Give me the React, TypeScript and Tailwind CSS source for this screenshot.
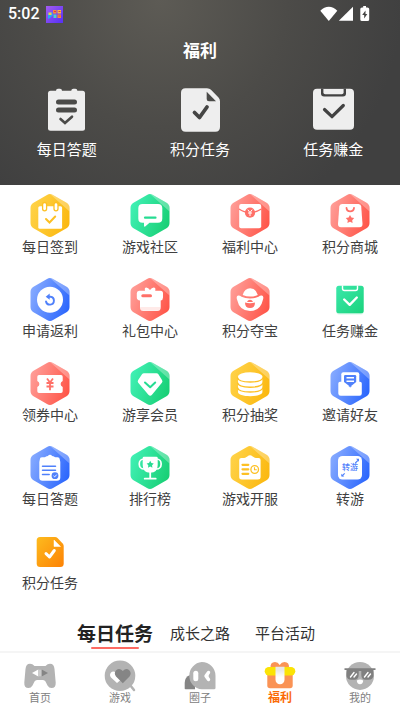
import { useState, ReactNode } from 'react'

type Tone = 'yellow' | 'green' | 'red' | 'blue'

const tones: Record<Tone, { from: string; to: string; solid: string }> = {
  yellow: { from: '#ffd247', to: '#fbb80f', solid: '#fdc023' },
  green: { from: '#40f0b4', to: '#18cf74', solid: '#26dc92' },
  red: { from: '#ff9d97', to: '#ff5548', solid: '#ff7068' },
  blue: { from: '#86aaff', to: '#2b66fd', solid: '#4f80fb' },
}

const STAR = 'M0 -4.2L1.4 -1.7L4.2 -1.2L2.2 .9L2.6 3.8L0 2.5L-2.6 3.8L-2.2 .9L-4.2 -1.2L-1.4 -1.7Z'

function Hexagon({ tone, children }: { tone: Tone; children: (solid: string) => ReactNode }) {
  const { from, to, solid } = tones[tone]
  return (
    <svg viewBox="0 0 40 44" className="h-11 w-10" aria-hidden="true">
      <defs>
        <linearGradient id={`hex-${tone}`} x1="0" y1="0.3" x2="1" y2="0.7">
          <stop offset="0" stopColor={from} />
          <stop offset="1" stopColor={to} />
        </linearGradient>
      </defs>
      <path
        d="M17 1Q20 -.8 23 1L36.5 8.8Q39.5 10.6 39.5 14V29Q39.5 32.4 36.5 34.2L23 42Q20 43.8 17 42L3.5 34.2Q.5 32.4 .5 29V14Q.5 10.6 3.5 8.8Z"
        fill={`url(#hex-${tone})`}
      />
      <path d="M20 .1Q21.5 .1 23 1L36.5 8.8Q39.5 10.6 39.5 14V17.5Z" fill="#fff" opacity=".3" />
      {children(solid)}
    </svg>
  )
}

function CheckinIcon() {
  return (
    <Hexagon tone="yellow">
      {(c) => (
        <>
          <rect x="8.3" y="12.2" width="23.8" height="22.6" rx="1.5" fill="#fff" />
          <rect x="12.6" y="8.5" width="4" height="8.3" rx="2" fill="#fff" stroke={c} strokeWidth="1.3" />
          <rect x="24" y="8.5" width="4" height="8.3" rx="2" fill="#fff" stroke={c} strokeWidth="1.3" />
          <path d="M16 25l3.5 3.5 5.7-6" fill="none" stroke={c} strokeWidth="2" strokeLinecap="round" />
        </>
      )}
    </Hexagon>
  )
}

function CommunityIcon() {
  return (
    <Hexagon tone="green">
      {(c) => (
        <>
          <path
            d="M12.5 10H28Q32.3 10 32.3 14.3V24.5Q32.3 28.8 28 28.8H19.5L15.2 32.6Q14 33 14 31.5V28.8H12.5Q8.3 28.8 8.3 24.5V14.3Q8.3 10 12.5 10Z"
            fill="#fff"
          />
          <path d="M15 23.7H25.5" stroke={c} strokeWidth="2.2" strokeLinecap="round" />
        </>
      )}
    </Hexagon>
  )
}

function EnvelopeIcon() {
  return (
    <Hexagon tone="red">
      {(c) => (
        <>
          <rect x="9.2" y="10" width="22" height="24.3" rx="2" fill="#fff" />
          <path d="M9 15Q14 18.5 20 18.5T31.4 15" fill="none" stroke={c} strokeWidth="1.3" />
          <circle cx="20" cy="18.7" r="5.1" fill={c} />
          <path d="M17.8 15.7L20 18.5L22.2 15.7M20 18.5V22M18 19H22" fill="none" stroke="#fff" strokeWidth="1" />
        </>
      )}
    </Hexagon>
  )
}

function MallIcon() {
  return (
    <Hexagon tone="red">
      {(c) => (
        <>
          <path
            d="M12 10H28.5Q31 10 31.2 12.5L32.5 30Q32.5 33.3 29.5 33.3H11Q8 33.3 8 30L9.3 12.5Q9.5 10 12 10Z"
            fill="#fff"
          />
          <path d="M16.5 13.8Q16.8 17.3 20.2 17.3T24 13.8" fill="none" stroke={c} strokeWidth="1.8" strokeLinecap="round" />
          <path d={STAR} transform="translate(20 25.3)" fill={c} />
        </>
      )}
    </Hexagon>
  )
}

function RefundIcon() {
  return (
    <Hexagon tone="blue">
      {(c) => (
        <>
          <circle cx="20" cy="21.7" r="13" fill="#fff" />
          <path d="M18 18.7H20.5A4 4 0 1 1 16 23.5" fill="none" stroke={c} strokeWidth="1.9" strokeLinecap="round" />
          <path d="M19.7 15.5V21.7L15.7 18.7Z" fill={c} />
        </>
      )}
    </Hexagon>
  )
}

function GiftIcon() {
  return (
    <Hexagon tone="red">
      {(c) => (
        <>
          <path
            d="M9.2 12.7H15Q14.2 9.5 16.3 9.5Q18.3 9.5 20 12Q21.7 9.5 23.7 9.5Q26 9.5 25.2 12.7H30.5Q33 12.7 33 15.2V19.5Q33 22 30.7 22.5V29.5Q30.7 33 27.2 33H13.5Q10 33 10 29.5V22.5Q6.8 22 6.8 19.5V15.2Q6.8 12.7 9.2 12.7Z"
            fill="#fff"
          />
          <path d="M12.8 17.7H20.5" stroke={c} strokeWidth="3" strokeLinecap="round" />
          <path d="M10.2 29H30.5V30Q30.5 32.8 27.2 32.8H13.5Q10.2 32.8 10.2 30Z" fill={c} opacity=".15" />
        </>
      )}
    </Hexagon>
  )
}

function IngotIcon() {
  return (
    <Hexagon tone="red">
      {(c) => (
        <>
          <path d="M12.7 17Q14.5 10.3 20.2 10.3T27.8 17Q24 18.5 20.2 18.5T12.7 17Z" fill="#fff" />
          <path
            d="M8 17.5Q10 17.3 11.5 18.8Q15 20.5 20 20.5T28.5 18.8Q30 17.3 32 17.5Q34 18 33 21.5Q30.5 33 20 33T7 21.5Q6 18 8 17.5Z"
            fill="#fff"
          />
          <path d="M17.3 23.3Q18 21.8 20 21.8T22.7 23.3V24H17.3Z" fill={c} />
          <path d="M15 24.5Q20 26 25 24.5Q25 30 20 30T15 24.5Z" fill={c} />
        </>
      )}
    </Hexagon>
  )
}

function EarnIcon() {
  return (
    <svg viewBox="0 0 40 44" className="h-11 w-10" aria-hidden="true">
      <defs>
        <linearGradient id="earn" x1="0" y1="0" x2="1" y2="1">
          <stop offset="0" stopColor="#3be8ab" />
          <stop offset="1" stopColor="#1bd37c" />
        </linearGradient>
      </defs>
      <rect x="6.5" y="8.5" width="27" height="28" rx="2.5" fill="#25d888" opacity=".2" />
      <rect x="6.3" y="7.8" width="27.4" height="27.4" rx="2.5" fill="url(#earn)" />
      <path d="M12.5 7.5V10.5Q12.5 12.5 14.5 12.5H25.5Q27.5 12.5 27.5 10.5V7.5" fill="none" stroke="#fff" strokeWidth="1.4" />
      <path d="M14.2 21.5L19.7 26.8L26.8 19.5" fill="none" stroke="#fff" strokeWidth="2.4" strokeLinecap="round" strokeLinejoin="round" />
    </svg>
  )
}

function CouponIcon() {
  return (
    <Hexagon tone="red">
      {(c) => (
        <>
          <path
            d="M9 13H31Q32.7 13 32.7 14.7V19A3.2 3.2 0 0 0 32.7 25V29.3Q32.7 31 31 31H9Q7.3 31 7.3 29.3V25A3.2 3.2 0 0 0 7.3 19V14.7Q7.3 13 9 13Z"
            fill="#fff"
          />
          <path d="M17 16.5L20 20.5L23 16.5M20 20.5V28.3M16.5 21H23.5M16.5 24.5H23.5" fill="none" stroke={c} strokeWidth="1.8" />
        </>
      )}
    </Hexagon>
  )
}

function MemberIcon() {
  return (
    <Hexagon tone="green">
      {(c) => (
        <>
          <path
            d="M14 11.3H26.5Q27.7 11.3 28.4 12.3L32 18Q33 19.5 31.9 20.8L22 32.8Q20.2 34.5 18.4 32.8L8.2 20.8Q7.2 19.5 8.2 18L12 12.3Q12.7 11.3 14 11.3Z"
            fill="#fff"
          />
          <path d="M15 20.5L20.2 25.3L25.2 20.5" fill="none" stroke={c} strokeWidth="2" strokeLinecap="round" strokeLinejoin="round" />
        </>
      )}
    </Hexagon>
  )
}

function CoinsIcon() {
  return (
    <Hexagon tone="yellow">
      {(c) => (
        <>
          <path d="M8 14.7V30C8 32.5 13.4 34.2 20.2 34.2S32.4 32.5 32.4 30V14.7Z" fill="#fff" />
          <ellipse cx="20.2" cy="14.7" rx="12.2" ry="4.4" fill="#fff" />
          <path
            d="M7.5 15.5C8 18.5 13.4 20 20.2 20S32.4 18.5 32.9 15.5M7.5 20.7C8 23.7 13.4 25.2 20.2 25.2S32.4 23.7 32.9 20.7M7.5 25.5C8 28.5 13.4 30 20.2 30S32.4 28.5 32.9 25.5"
            fill="none"
            stroke={c}
            strokeWidth="1.4"
          />
        </>
      )}
    </Hexagon>
  )
}

function InviteIcon() {
  return (
    <Hexagon tone="blue">
      {(c) => (
        <>
          <rect x="11.3" y="10.3" width="18" height="14" rx="2" fill="#fff" />
          <path
            d="M10 19.7H12.5Q13.5 19.7 14 20.5L20.2 25.5L26.5 20.5Q27 19.7 28 19.7H30Q31.8 19.7 31.8 21.5V31.5Q31.8 33.8 29.5 33.8H10.7Q8.3 33.8 8.3 31.5V21.5Q8.3 19.7 10 19.7Z"
            fill="#fff"
          />
          <path d="M14 14.2Q14 13 15.2 13H25Q26.2 13 26.2 14.2V20L20.2 24.8L14 20Z" fill={c} />
          <path d="M16.5 15.8H24M16.5 19.2H24" stroke="#fff" strokeWidth="1.5" />
        </>
      )}
    </Hexagon>
  )
}

function QuizIcon() {
  return (
    <Hexagon tone="blue">
      {(c) => (
        <>
          <path
            d="M12 11.3H14.5Q15.5 11.3 16 10.5Q16.5 10 18 10Q18.500 8.800 20 8.800T22 10Q23.5 10 24 10.5Q24.5 11.3 25.5 11.3H27.5Q29.8 11.3 29.8 13.500L30.3 16V31.5Q30.3 34.7 27 34.7H12.5Q9.3 34.7 9.3 31.5V16L9.800 13.5Q9.8 11.3 12 11.3Z"
            fill="#fff"
          />
          <path d="M12.5 20.2H25.5M12.5 24.3H25.5M12.5 28.4H19.2" stroke={c} strokeWidth="1.5" strokeLinecap="round" />
          <circle cx="25" cy="29.7" r="3.4" fill={c} />
          <path d="M23.5 29.8L24.7 30.9L26.7 28.6" fill="none" stroke="#fff" strokeWidth=".9" />
        </>
      )}
    </Hexagon>
  )
}

function TrophyIcon() {
  return (
    <Hexagon tone="green">
      {(c) => (
        <>
          <rect x="9.3" y="13" width="21.8" height="10" rx="4.5" fill="none" stroke="#fff" strokeWidth="1.7" />
          <path d="M14 10.7H26.4Q27.7 10.7 27.7 12V19Q27.7 26.7 20.2 26.7T12.7 19V12Q12.7 10.7 14 10.7Z" fill="#fff" />
          <path d="M20.2 26V32.5M14.7 32.7H25.7" stroke="#fff" strokeWidth="1.8" strokeLinecap="round" />
          <path d={STAR} transform="translate(20.2 18.4) scale(.85)" fill={c} />
        </>
      )}
    </Hexagon>
  )
}

function OpeningIcon() {
  return (
    <Hexagon tone="yellow">
      {(c) => (
        <>
          <path
            d="M11.5 12H14Q15.5 12 16 11.3Q17 11 17.7 10.3Q18.5 9.3 20 9.3T22.3 10.3Q23 11 24 11.3Q24.5 12 26 12H28.5Q30.6 12 30.6 14V31Q30.6 33.5 27.8 33.5H12Q9.2 33.5 9.2 31V14Q9.2 12 11.5 12Z"
            fill="#fff"
          />
          <path d="M12.5 18.8H18.3M12.5 23.3H18.3M12.5 27.8H18.3" stroke={c} strokeWidth="2.2" strokeLinecap="round" />
          <circle cx="24.7" cy="23.5" r="3.8" fill="#fff" stroke={c} strokeWidth="1.3" />
          <path d="M24.5 21.3V23.8H26.8" fill="none" stroke={c} strokeWidth="1.1" />
        </>
      )}
    </Hexagon>
  )
}

function TransferIcon() {
  return (
    <Hexagon tone="blue">
      {(c) => (
        <>
          <rect x="8" y="10" width="24" height="23.5" rx="4.5" fill="#fff" />
          <text x="20" y="24" textAnchor="middle" fontSize="8" fontWeight="500" fill={c}>
            转游
          </text>
          <path d="M25.3 17L28 14.3M12 30L14.7 27.3" stroke={c} strokeWidth="1.1" />
          <path d="M26 12.7H29V15.7ZM11.3 27.7V30.5H14.3Z" fill={c} />
        </>
      )}
    </Hexagon>
  )
}

function PointsIcon() {
  return (
    <svg viewBox="0 0 40 44" className="h-11 w-10" aria-hidden="true">
      <defs>
        <linearGradient id="points" x1="0" y1="0" x2="1" y2="1">
          <stop offset="0" stopColor="#fdbb1e" />
          <stop offset="1" stopColor="#fd8205" />
        </linearGradient>
      </defs>
      <path
        d="M10 7H25Q26.5 7 27.5 8L32.7 13.5Q33.7 14.7 33.7 16V33.5Q33.7 37 30.2 37H10.2Q6.7 37 6.7 33.5V10.5Q6.7 7 10 7Z"
        fill="url(#points)"
      />
      <path d="M24 10L30.5 16.5H24Z" fill="#fff" stroke="#fff" strokeWidth=".5" strokeLinejoin="round" />
      <path d="M16 23.6L19.5 27L24.3 20.5" fill="none" stroke="#fff" strokeWidth="3" strokeLinecap="round" strokeLinejoin="round" />
    </svg>
  )
}

const shortcuts = [
  {
    label: '每日答题',
    icon: (
      <svg viewBox="0 0 44 44" className="size-11" aria-hidden="true">
        <rect x="3" y="2.7" width="37" height="40" rx="2.5" fill="#eee" />
        <rect x="11" y=".7" width="6" height="5" rx="2" fill="#eee" />
        <rect x="26.3" y=".7" width="6" height="5" rx="2" fill="#eee" />
        <path d="M13.5 14H29.5M13.5 22H29.5" stroke="#4b4b49" strokeWidth="5" strokeLinecap="round" />
        <path d="M15.5 31L20 35L27 28.7" fill="none" stroke="#4b4b49" strokeWidth="2.6" strokeLinecap="round" />
      </svg>
    ),
  },
  {
    label: '积分任务',
    icon: (
      <svg viewBox="0 0 44 44" className="size-11" aria-hidden="true">
        <path
          d="M7.5 .2H29Q31.5 .2 33 1.7L40.5 9.5Q42 11 42 13.5V39Q42 43.7 37.3 43.7H7.7Q3 43.7 3 39V4.7Q3 .2 7.5 .2Z"
          fill="#eee"
        />
        <path d="M28.7 3.7L38 13.3H31Q28.7 13.3 28.7 11Z" fill="#4b4b49" />
        <path d="M16.5 24.5L21.5 29.5L29 19" fill="none" stroke="#454544" strokeWidth="3.8" strokeLinecap="round" strokeLinejoin="round" />
      </svg>
    ),
  },
  {
    label: '任务赚金',
    icon: (
      <svg viewBox="0 0 44 44" className="size-11" aria-hidden="true">
        <rect x="2" y=".8" width="41" height="41" rx="4" fill="#eee" />
        <path d="M10 .5H35V5.5Q35 8.5 32 8.5H13Q10 8.5 10 5.5Z" fill="#424242" />
        <path d="M12.4 1H32.6V4.5Q32.6 6.3 30.8 6.3H14.2Q12.4 6.3 12.4 4.5Z" fill="#eee" />
        <path d="M13.5 21.5L21 28.7L32.3 17.5" fill="none" stroke="#424242" strokeWidth="3.2" strokeLinecap="round" strokeLinejoin="round" />
      </svg>
    ),
  },
]

const services = [
  { label: '每日签到', icon: <CheckinIcon /> },
  { label: '游戏社区', icon: <CommunityIcon /> },
  { label: '福利中心', icon: <EnvelopeIcon /> },
  { label: '积分商城', icon: <MallIcon /> },
  { label: '申请返利', icon: <RefundIcon /> },
  { label: '礼包中心', icon: <GiftIcon /> },
  { label: '积分夺宝', icon: <IngotIcon /> },
  { label: '任务赚金', icon: <EarnIcon /> },
  { label: '领券中心', icon: <CouponIcon /> },
  { label: '游享会员', icon: <MemberIcon /> },
  { label: '积分抽奖', icon: <CoinsIcon /> },
  { label: '邀请好友', icon: <InviteIcon /> },
  { label: '每日答题', icon: <QuizIcon /> },
  { label: '排行榜', icon: <TrophyIcon /> },
  { label: '游戏开服', icon: <OpeningIcon /> },
  { label: '转游', icon: <TransferIcon /> },
  { label: '积分任务', icon: <PointsIcon /> },
]

const taskTabs = ['每日任务', '成长之路', '平台活动']

const navItems = [
  {
    label: '首页',
    icon: (
      <>
        <path
          d="M7 3.7Q9.5 3.7 11.5 6H22.5Q24.5 3.7 27 3.7Q31 3.7 31.5 9L32.7 22.5Q33 28 28.5 28Q26 28 24.5 25.5L22.5 21.5Q21.7 20 20 20H14Q12.3 20 11.5 21.5L9.5 25.5Q8 28 5.5 28Q1 28 1.3 22.5L2.5 9Q3 3.7 7 3.7Z"
          fill="#b3b3b3"
        />
        <path d="M9 13L15.3 9.5V16.5Z" fill="#fff" />
        <path d="M15.3 9.7H18.7V16.3H15.3Z" fill="#ccc" />
        <path d="M25 13L18.7 9.5V16.5Z" fill="#858585" />
      </>
    ),
  },
  {
    label: '游戏',
    icon: (
      <>
        <circle cx="17" cy="15.8" r="15.3" fill="#b3b3b3" />
        <path d="M27 25L31 30" stroke="#b3b3b3" strokeWidth="2.5" strokeLinecap="round" />
        <path d="M14 23L8 17.5Q6 15 8 12.5Q10.5 10.5 13 13Q15 10 19 12L20 18Z" fill="#fff" />
        <path d="M19.8 23.3L13 16.5Q10.5 13 13.2 10.2Q16.5 7.7 19.8 11Q23 7.7 26.3 10.2Q29 13 26.5 16.5Z" fill="#858585" />
      </>
    ),
  },
  {
    label: '圈子',
    icon: (
      <>
        <path d="M7 15Q1.7 17 1.7 23V28.5Q1.7 29.3 2.5 29.3H12V15Z" fill="#858585" />
        <path d="M18.8 2A13.7 13.7 0 0 1 32.5 15.7V28Q32.5 29.3 31 29.3H18.8A13.7 13.7 0 0 1 18.8 2Z" fill="#b3b3b3" />
        <rect x="10.3" y="10.7" width="5" height="10.6" rx="2.5" fill="#fff" />
        <path d="M25.5 12.5L23 16L25.5 19.5" fill="#fff" stroke="#fff" strokeWidth="3.4" strokeLinecap="round" strokeLinejoin="round" />
      </>
    ),
  },
  {
    label: '福利',
    icon: (
      <>
        <defs>
          <linearGradient id="ribbon" x1="0" y1="0" x2="0" y2="1">
            <stop offset=".2" stopColor="#e8e8e8" />
            <stop offset=".6" stopColor="#fff" />
          </linearGradient>
        </defs>
        <path d="M7.5 8Q7 2 12 2Q15 2 16.7 5Q18.5 2 21.5 2Q26.5 2 26 8Z" fill="#fa9355" />
        <path d="M4.3 14H29.7V25.5Q29.7 28.2 27 28.2H7Q4.3 28.2 4.3 25.5Z" fill="#fa9355" />
        <rect x="1.7" y="7" width="30.6" height="8.5" rx="4.2" fill="#fbe305" />
        <path d="M12.5 6.7H21.5V19.7A4.5 4.5 0 0 1 12.5 19.7Z" fill="url(#ribbon)" />
      </>
    ),
  },
  {
    label: '我的',
    icon: (
      <>
        <circle cx="17" cy="15.9" r="14" fill="#b3b3b3" />
        <path
          d="M1.5 8.2H32.5V10H30.5V15Q30.5 19.8 25.5 19.8H22.5Q18.5 19.8 18.3 15V11H15.7V15Q15.5 19.8 11.5 19.8H8.5Q3.5 19.8 3.5 15V10H1.5Z"
          fill="#808080"
        />
        <path d="M7.5 17L11 12.5M11 17L13.5 14M21.5 17L25 12.5M25 17L27.5 14" stroke="#fff" strokeWidth="1.4" strokeLinecap="round" />
        <path d="M13.8 20.5Q17 18.5 20.2 20.5Q20 24.2 17 24.2T13.8 20.5Z" fill="#fff" />
      </>
    ),
  },
]

function StatusBar() {
  return (
    <div className="flex h-7 items-center justify-between pr-7 pl-2">
      <div className="flex items-center gap-1.5">
        <span className="font-['Roboto'] text-base font-medium">5:02</span>
        <svg viewBox="0 0 17 17" className="size-[17px]" aria-hidden="true">
          <defs>
            <linearGradient id="app" x1="0" y1="0" x2="1" y2="1">
              <stop offset="0" stopColor="#a45cf0" />
              <stop offset="1" stopColor="#5530f5" />
            </linearGradient>
          </defs>
          <rect width="17" height="17" fill="url(#app)" />
          <path d="M2 7L6 6L7 9L4 12L2 13Z" fill="#27a9f5" />
          <rect x="2.5" y="6.5" width="3" height="2.5" fill="#f7c94b" />
          <path d="M7 4H10.5V7.5H7ZM11.5 8.5H15V12H11.5Z" fill="#f58a3c" />
          <path d="M11.5 4H15V7.5H11.5Z" fill="#fbb945" />
          <path d="M7.5 8.5H10.5V12H7.5Z" fill="#4fd6c6" />
          <path d="M8 5.5H10M12.5 5.5H14.5M12.5 10H14.5" stroke="#e0413c" strokeWidth="1" />
        </svg>
      </div>
      <svg viewBox="0 0 52 16" className="h-4 w-[52px]" fill="#fff" aria-hidden="true">
        <path d="M.3 4.8Q4.2 .8 8.8 .8T17.3 4.8L8.8 15Z" />
        <path d="M33 .8V14.7H18.8Z" />
        <path
          fillRule="evenodd"
          d="M43.2 0H46V1.5H47.5Q49.2 1.5 49.2 3V13.5Q49.2 15 47.5 15H42Q40.3 15 40.3 13.5V3Q40.3 1.5 42 1.5H43.2ZM45.5 4.5L42.2 9H44.2V12.5L47.3 8H45.5Z"
        />
      </svg>
    </div>
  )
}

export default function App() {
  const [activeTask, setActiveTask] = useState('每日任务')
  const [activeNav, setActiveNav] = useState('福利')

  return (
    <div className="flex min-h-screen flex-col bg-white font-['Noto_Sans_CJK_SC',sans-serif] text-[#404040]">
      <header className="bg-[radial-gradient(circle_at_40%_0%,#5d5b55_0%,#4c4b48_42%,#404040_80%)] pb-6 text-white">
        <StatusBar />
        <h1 className="pt-2.5 text-center text-[17px] leading-6 font-bold">福利</h1>
        <div className="grid grid-cols-3 pt-[26px]">
          {shortcuts.map((item) => (
            <a key={item.label} href="#" className="flex flex-col items-center gap-[5px]">
              {item.icon}
              <span className="text-[15px] leading-6">{item.label}</span>
            </a>
          ))}
        </div>
      </header>

      <main>
        <div className="grid grid-cols-4 gap-y-[22px] pt-[9px]">
          {services.map((item) => (
            <a key={item.label} href="#" className="flex flex-col items-center">
              {item.icon}
              <span className="-mt-0.5 text-sm leading-5">{item.label}</span>
            </a>
          ))}
        </div>

        <div role="tablist" className="flex justify-center pt-[25px]">
          {taskTabs.map((tab) => (
            <button
              key={tab}
              role="tab"
              aria-selected={activeTask === tab}
              onClick={() => setActiveTask(tab)}
              className="flex w-[85px] flex-col items-center whitespace-nowrap"
            >
              <span className={activeTask === tab ? 'text-[19px] leading-8 font-bold text-[#222]' : 'text-[15px] leading-8 text-[#333]'}>
                {tab}
              </span>
              {activeTask === tab && <span className="-mt-0.5 h-0.5 w-12 rounded-full bg-[#fd6a62]" />}
            </button>
          ))}
        </div>
      </main>

      <nav className="mt-auto grid grid-cols-5 border-t-2 border-[#f5f5f5] pt-[7px] pb-[5px]">
        {navItems.map((item) => (
          <a
            key={item.label}
            href="#"
            onClick={() => setActiveNav(item.label)}
            className="flex flex-col items-center"
          >
            <svg viewBox="0 0 34 32" className="h-8 w-[34px]" aria-hidden="true">
              {item.icon}
            </svg>
            <span
              className={
                activeNav === item.label
                  ? '-mt-1 text-xs leading-[18px] font-bold text-[#fb6a06]'
                  : '-mt-1 text-[11px] leading-[18px] text-[#808080]'
              }
            >
              {item.label}
            </span>
          </a>
        ))}
      </nav>
    </div>
  )
}
